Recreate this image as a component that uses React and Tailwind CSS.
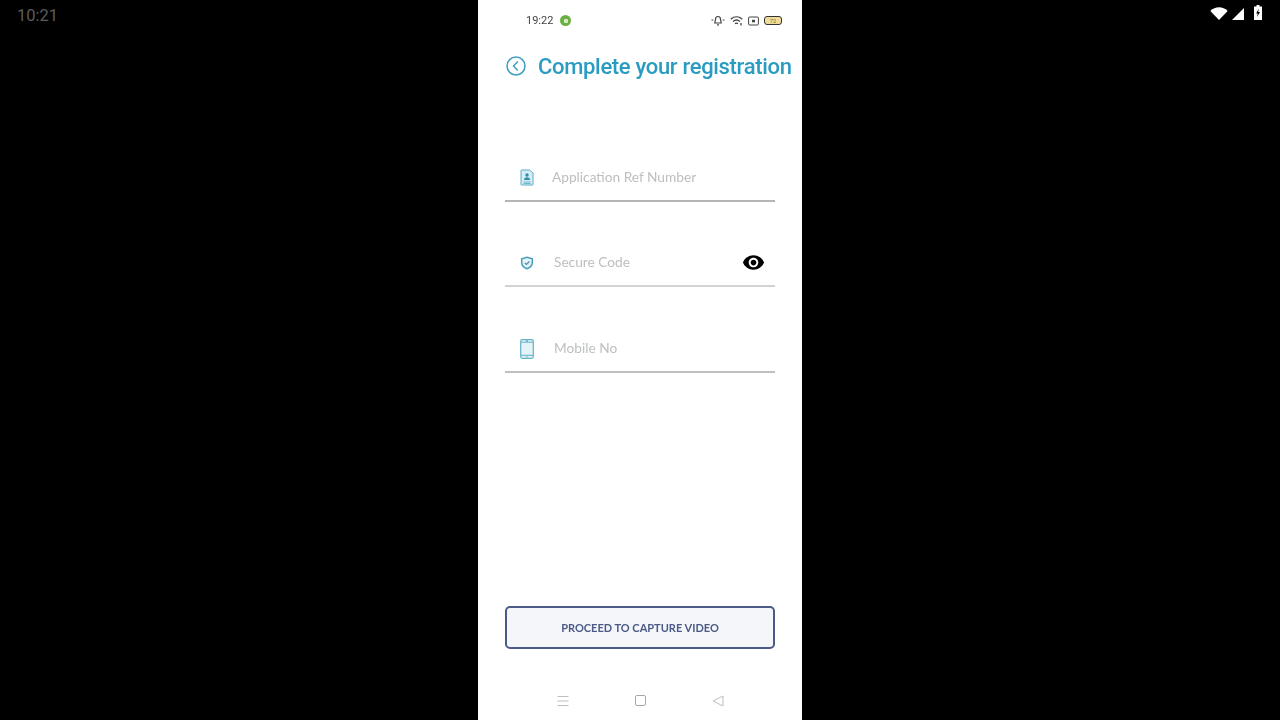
import React from "react";

const Field = ({ icon, label, textClass, trailing, lineClass }) => (
  <div className={`flex h-[45px] items-center border-b-2 pb-[2px] ${lineClass}`}>
    <div className="flex w-[43px] shrink-0 justify-center">{icon}</div>
    <span className={`font-['Lato',sans-serif] text-[13.7px] text-[#bcbec0] ${textClass}`}>{label}</span>
    {trailing}
  </div>
);

const ProfileDocIcon = () => (
  <svg width="14" height="17" viewBox="0 0 14 17" fill="none">
    <path d="M1.5 1h8l3.500 3v11.500a.5.500 0 0 1-.5.500h-11a.5.500 0 0 1-.5-.500v-14a.5.500 0 0 1 .5-.500z" fill="#d8edf3" stroke="#5aaec8" />
    <circle cx="7" cy="6" r="1.700" fill="#2f8fb0" />
    <path d="M4 11c0-2 1.200-2.800 3-2.800s3 .8 3 2.800z" fill="#2f8fb0" />
    <path d="M3.500 13h7M3.500 14.500h7" stroke="#6db7cd" />
  </svg>
);

const ShieldIcon = () => (
  <svg width="14" height="14" viewBox="0 0 14 14" fill="none">
    <path d="M7 1.200l5.300 1.600v4c0 2.800-2.200 4.800-5.300 6-3.100-1.200-5.300-3.200-5.300-6v-4z" fill="#e6f3f7" stroke="#4a9fbc" strokeWidth="1.500" />
    <path d="M4.700 6.800l1.700 1.700 3-3" stroke="#4a8fa8" strokeWidth="1.200" />
  </svg>
);

const PhoneIcon = () => (
  <svg width="14" height="20" viewBox="0 0 14 20" fill="none">
    <rect x=".7" y=".7" width="12.600" height="18.600" rx="1.500" fill="#e4f3f7" stroke="#63b3ca" strokeWidth="1.200" />
    <path d="M1 3.200h12M1 16.300h12" stroke="#63b3ca" />
    <path d="M6 2h2M6.500 17.800h1" stroke="#3f8ea8" />
  </svg>
);

const EyeIcon = () => (
  <svg width="23" height="23" viewBox="0 0 24 24" fill="black" className="ml-auto mr-[10px]">
    <path d="M12 4.500C7 4.500 2.730 7.610 1 12c1.730 4.390 6 7.500 11 7.500s9.270-3.110 11-7.500c-1.730-4.390-6-7.500-11-7.500zM12 17c-2.760 0-5-2.240-5-5s2.240-5 5-5 5 2.240 5 5-2.240 5-5 5zm0-8c-1.660 0-3 1.340-3 3s1.340 3 3 3 3-1.340 3-3-1.340-3-3-3z" />
  </svg>
);

const StatusIcons = () => (
  <div className="flex items-center gap-[5px]">
    <svg width="14" height="11" viewBox="0 0 14 11" fill="none" stroke="#444" strokeWidth="1.200">
      <path d="M7 1.500c-1.800 0-2.500 1.500-2.500 3L3.800 8h6.400l-.7-3.500c0-1.500-.7-3-2.500-3z" />
      <path d="M.5 5h1.800M11.700 5h1.800M6 9.800h2" />
    </svg>
    <svg width="13" height="10" viewBox="0 0 13 10" fill="none" stroke="#444" strokeWidth="1.300">
      <path d="M.8 3.200c3.400-3 8-3 11.400 0M3 5.500c2-1.700 5-1.700 7 0M5 7.700c.9-.7 2.100-.7 3 0" />
      <path d="M11 7v2.500" />
    </svg>
    <svg width="11" height="10" viewBox="0 0 11 10" fill="none">
      <rect x=".6" y="1" width="9.800" height="8" rx="1" stroke="#444" />
      <rect x="4" y="3.800" width="3" height="2.500" fill="#444" />
    </svg>
    <div className="flex h-[9px] w-[18px] items-center justify-center rounded-[3px] border border-[#333] bg-[#f0dc9a] font-['Roboto',sans-serif] text-[6px] leading-none text-[#8a7a3a]">
      72
    </div>
  </div>
);

const App = () => {
  return (
    <div className="flex h-screen w-full overflow-hidden bg-black">
      <div className="w-[478px] shrink-0 pl-[17px] pt-[5px] font-['Roboto',sans-serif] text-[16.500px] leading-[21px] text-[#5c5c5c]">
        10:21
      </div>

      <div className="flex w-[324px] shrink-0 flex-col bg-white blur-[0.4px]">
        <div className="flex h-[40px] items-center justify-between pl-[48px] pr-[20px] pt-[1px]">
          <div className="flex items-center gap-[7px]">
            <span className="pt-[1px] font-['Roboto',sans-serif] text-[11px] text-[#444]">19:22</span>
            <div className="flex h-[11px] w-[11px] items-center justify-center rounded-full bg-[#6cb044]">
              <div className="h-[4px] w-[4px] rounded-[1px] bg-[#d5ecc5]" />
            </div>
          </div>
          <StatusIcons />
        </div>

        <div className="flex h-[52px] items-center pl-[28px]">
          <svg width="20" height="20" viewBox="0 0 20 20" fill="none" stroke="#3f9fc0" strokeWidth="1.500">
            <circle cx="10" cy="10" r="9" />
            <path d="M11.800 5.500L7.500 10l4.300 4.500" />
          </svg>
          <h1 className="ml-[12px] whitespace-nowrap font-['Roboto',sans-serif] text-[22px] font-medium tracking-[-0.32px] text-[#2a9cc2]">
            Complete your registration
          </h1>
        </div>

        <div className="flex flex-col gap-[40px] px-[27px] pt-[65px]">
          <Field icon={<ProfileDocIcon />} label="Application Ref Number" textClass="ml-[4px]" lineClass="border-[#b4b5b6]" />
          <Field
            icon={<ShieldIcon />}
            label="Secure Code"
            textClass="ml-[6px]"
            lineClass="border-[#d2d3d4]"
            trailing={<EyeIcon />}
          />
          <div className="mt-[1px]">
            <Field icon={<PhoneIcon />} label="Mobile No" textClass="ml-[6px]" lineClass="border-[#bfc0c1]" />
          </div>
        </div>

        <button className="mx-[27px] mt-[233px] flex h-[43px] items-center justify-center rounded-[5px] border-2 border-[#4b5a86] bg-[#f5f6fa] pt-[1px] font-['Lato',sans-serif] text-[11px] font-bold text-[#4b5a86]">
          PROCEED TO CAPTURE VIDEO
        </button>

        <div className="mt-auto flex h-[40px] items-start justify-between pl-[79px] pr-[78px] pt-[15px]">
          <svg width="12" height="12" viewBox="0 0 12 12" fill="none" stroke="#bdbdbd">
            <path d="M.5 1.500h11M.5 6h11M.5 10.500h11" />
          </svg>
          <div className="h-[11px] w-[11px] rounded-[2px] border border-[#a8a8a8]" />
          <svg width="12" height="12" viewBox="0 0 12 12" fill="none" stroke="#bdbdbd">
            <path d="M11 1L1 6l10 5z" />
          </svg>
        </div>
      </div>

      <div className="flex flex-1 items-start justify-end pr-[18px] pt-[5px]">
        <svg width="18" height="13" viewBox="0 0 20 15" fill="white" className="mt-[2px]">
          <path d="M0 4.500C5.500-1 14.500-1 20 4.500L10 15z" />
        </svg>
        <svg width="12" height="12" viewBox="0 0 14 14" fill="white" className="ml-[4px] mt-[3px]">
          <path d="M14 0v14H0z" />
        </svg>
        <svg width="8" height="15" viewBox="0 0 8 15" className="ml-[10px]">
          <path d="M2.500 0h3v1.500H8V15H0V1.500h2.500z" fill="white" />
          <path d="M4.800 3.500L2.200 8.500h1.600L3 12l3-5H4.200z" fill="black" />
        </svg>
      </div>
    </div>
  );
};

export default App;
